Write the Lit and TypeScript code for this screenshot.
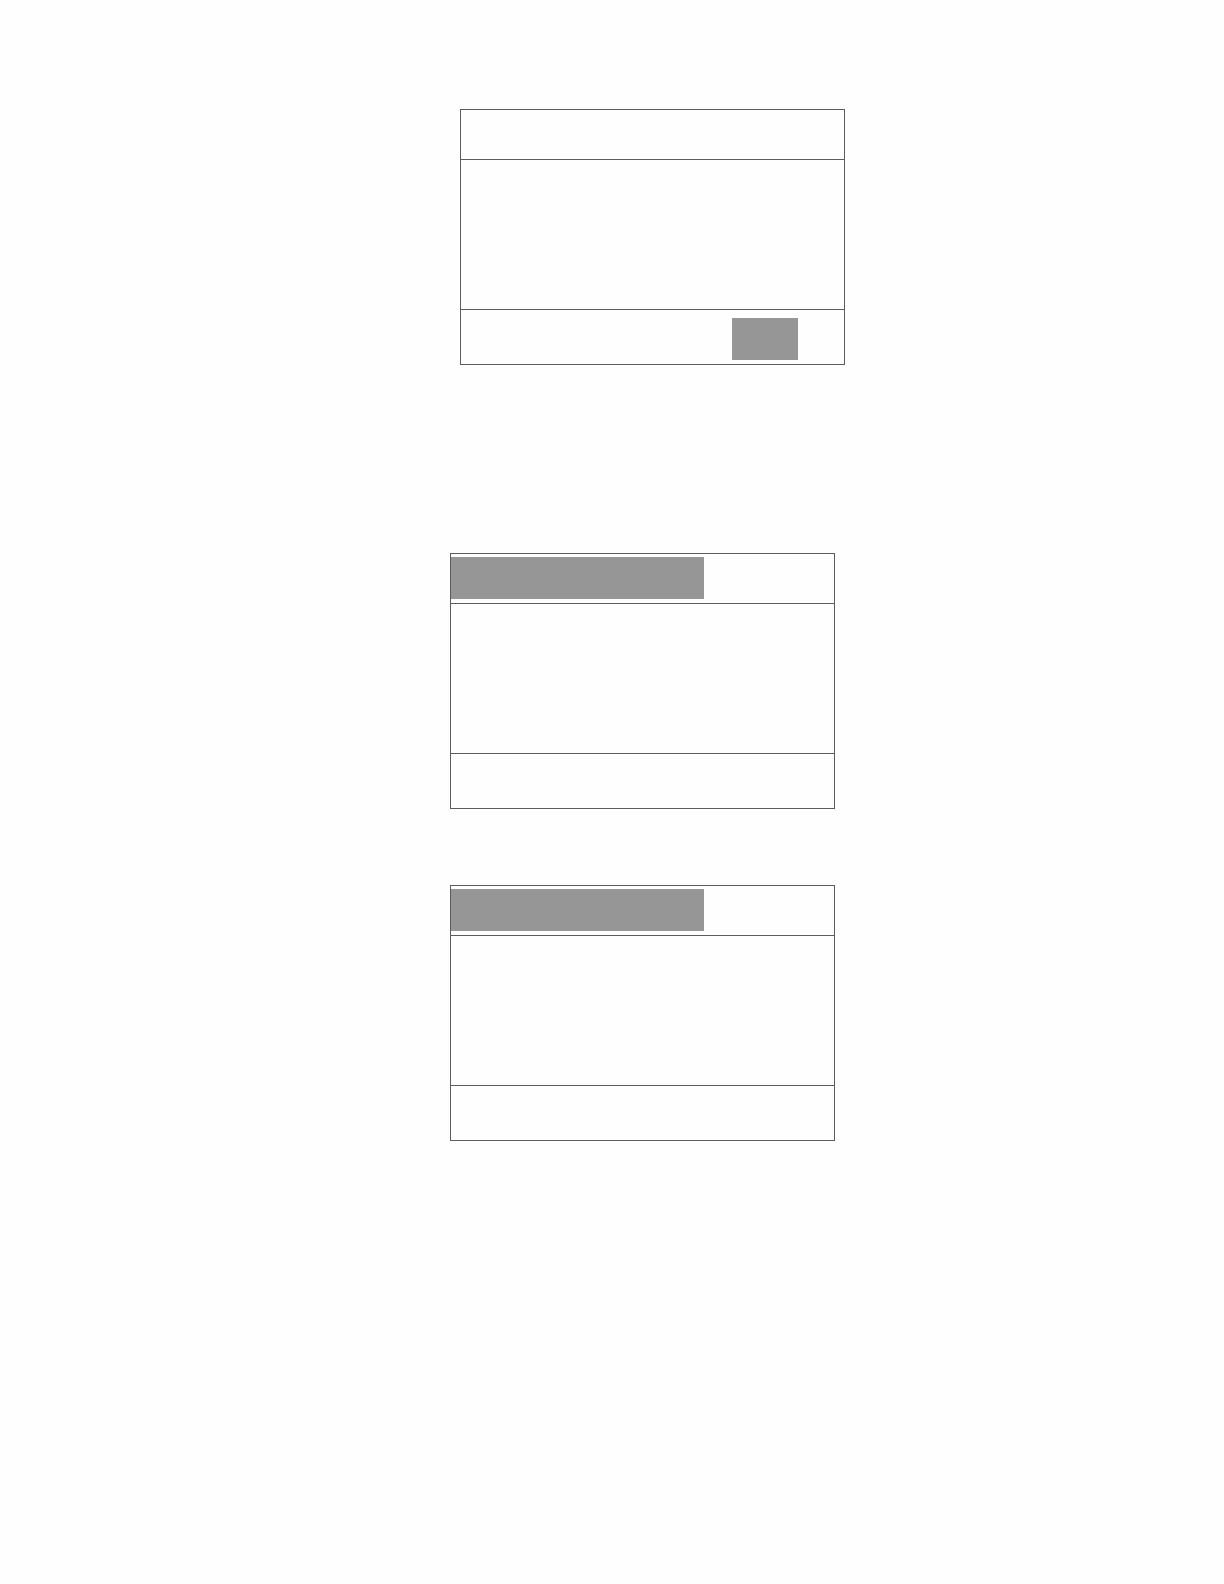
import { LitElement, html, css, nothing } from "lit";
import { customElement, property } from "lit/decorators.js";

type Highlight = "header" | "footer";

/** A three-part outline frame with one shaded region. */
@customElement("outline-frame")
class OutlineFrame extends LitElement {
  @property() highlight: Highlight = "header";

  static styles = css`
    :host {
      display: block;
    }
    .frame {
      border: 1px solid #5c5c5c;
    }
    .header,
    .footer {
      display: flex;
      align-items: flex-start;
    }
    .header {
      min-height: 46px;
      padding-top: 3px;
      border-bottom: 1px solid #5c5c5c;
    }
    .body {
      min-height: 149px;
    }
    .footer {
      min-height: 46px;
      padding: 8px 46px 0 0;
      justify-content: flex-end;
      border-top: 1px solid #5c5c5c;
    }
    .shade {
      height: 42px;
      background: #969696;
    }
    .header .shade {
      width: 66%;
    }
    .footer .shade {
      width: 66px;
    }
  `;

  render() {
    const shade = html`<div class="shade"></div>`;
    return html`
      <section class="frame">
        <header class="header">
          ${this.highlight === "header" ? shade : nothing}
        </header>
        <div class="body"></div>
        <footer class="footer">
          ${this.highlight === "footer" ? shade : nothing}
        </footer>
      </section>
    `;
  }
}

@customElement("app-root")
class AppRoot extends LitElement {
  static styles = css`
    :host {
      display: block;
      min-height: 100vh;
      background: #fefefe;
      font-family: "Liberation Sans", sans-serif;
    }
    .page {
      display: flex;
      flex-direction: column;
      align-items: center;
      gap: 76px;
      padding: 109px 0 76px 61px;
    }
    .slot {
      width: 100%;
      max-width: 385px;
    }
    .lead {
      display: flex;
      justify-content: center;
      width: 100%;
      box-sizing: border-box;
      padding: 0 0 112px 20px;
    }
  `;

  render() {
    return html`
      <main class="page">
        <div class="lead">
          <outline-frame class="slot" highlight="footer"></outline-frame>
        </div>
        <outline-frame class="slot" highlight="header"></outline-frame>
        <outline-frame class="slot" highlight="header"></outline-frame>
      </main>
    `;
  }
}
